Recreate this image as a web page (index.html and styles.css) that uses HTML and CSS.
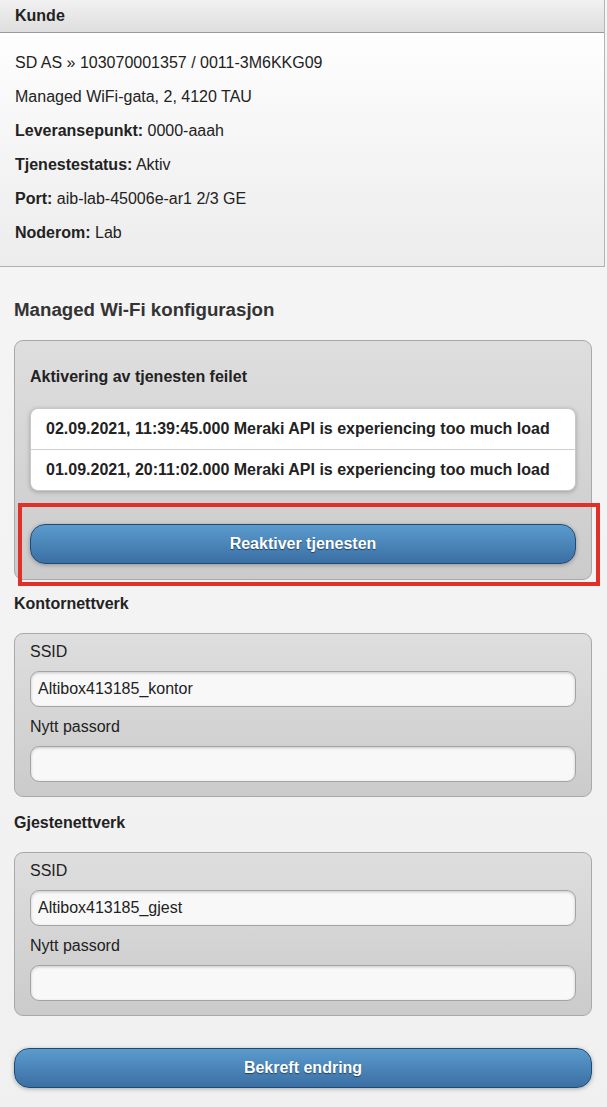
FILE: index.html
```html
<!DOCTYPE html>
<html>
  <head>
  <meta charset="utf-8">
  <link rel="stylesheet" href="styles.css">
  </head>
  <body>

    <div class="collapsible">
      <div class="collapsible-heading">Kunde</div>
      <div class="collapsible-content">
        <p>SD AS &raquo; 103070001357 / 0011-3M6KKG09</p>
        <p>Managed WiFi-gata, 2, 4120 TAU</p>
        <p><strong>Leveransepunkt:</strong> 0000-aaah</p>
        <p><strong>Tjenestestatus:</strong> Aktiv</p>
        <p><strong>Port:</strong> aib-lab-45006e-ar1 2/3 GE</p>
        <p><strong>Noderom:</strong> Lab</p>
      </div>
    </div>

    <div class="page">
      <h2>Managed Wi-Fi konfigurasjon</h2>

      <div class="box box-error">
        <h3>Aktivering av tjenesten feilet</h3>
        <ul class="listview">
          <li>02.09.2021, 11:39:45.000 Meraki API is experiencing too much load</li>
          <li>01.09.2021, 20:11:02.000 Meraki API is experiencing too much load</li>
        </ul>
        <div class="button-wrap">
          <button class="btn">Reaktiver tjenesten</button>
          <div class="highlight"></div>
        </div>
      </div>

      <h4 class="first">Kontornettverk</h4>
      <div class="box">
        <label>SSID</label>
        <input class="field" type="text" value="Altibox413185_kontor">
        <label>Nytt passord</label>
        <input class="field" type="password" value="">
      </div>

      <h4>Gjestenettverk</h4>
      <div class="box">
        <label>SSID</label>
        <input class="field" type="text" value="Altibox413185_gjest">
        <label>Nytt passord</label>
        <input class="field" type="password" value="">
      </div>

      <button class="btn btn-submit">Bekreft endring</button>
    </div>

  </body>
</html>
```

FILE: styles.css
```css
html, body {
  height: 100%;
}
body {
  --box-border: #a9a9a9;
  --text: #222;

  margin: 0;
  font-family: "Liberation Sans", Arial, sans-serif;
  font-size: 16px;
  color: var(--text);
  background: linear-gradient(to bottom, #f6f6f6, #f0f0f0);
}

/* customer panel at the top */
.collapsible {
  margin-right: 2px;
  border-right: 1px solid #b4b4b4;
}
.collapsible-heading {
  height: 32px;
  line-height: 31px;
  padding-left: 15px;
  font-weight: bold;
  background: linear-gradient(to bottom, #f1f1f1, #dedede);
  border-bottom: 1px solid #9a9a9a;
}
.collapsible-content {
  padding: 13px 15px 16px;
  background: linear-gradient(to bottom, #fefefe, #ececec);
  border-bottom: 1px solid #b0b0b0;
}
.collapsible-content p {
  margin: 0;
  line-height: 34px;
}

.page {
  padding: 31px 15px 18px 14px;
}

h2 {
  margin: 0 0 18px;
  font-size: 18.7px;
  line-height: 24px;
  color: #333;
}
h4 {
  margin: 16px 0 19px;
  font-size: 16px;
  line-height: 20px;
}
h4.first {
  margin-top: 14px;
}

.box {
  border: 1px solid var(--box-border);
  border-radius: 9px;
  background: linear-gradient(to bottom, #dedede, #cbcbcb);
  padding: 8px 15px 14px;
}
.box-error {
  padding: 26px 15px 15px;
}
.box-error h3 {
  margin: 0 0 21px;
  font-size: 16px;
  line-height: 20px;
}

.listview {
  list-style: none;
  margin: 0 0 33px;
  padding: 0;
  background: #fff;
  border: 1px solid #c8c8c8;
  border-radius: 8px;
  box-shadow: 0 1px 4px rgba(0,0,0,0.25);
}
.listview li {
  height: 40px;
  line-height: 40px;
  padding-left: 15px;
  font-weight: bold;
  white-space: nowrap;
}
.listview li + li {
  border-top: 1px solid #cfcfcf;
}

.btn {
  display: block;
  width: 100%;
  height: 40px;
  border: 1px solid #1f4a74;
  border-radius: 15px;
  background: linear-gradient(to bottom, #5b9bcd, #3b6fa4);
  color: #fff;
  font-family: inherit;
  font-size: 16px;
  font-weight: bold;
  text-shadow: 0 1px 1px #1d4166;
  box-shadow: 0 1px 4px rgba(0,0,0,0.3);
}
.btn-submit {
  margin-top: 32px;
}

.button-wrap {
  position: relative;
}
/* red annotation frame around the reactivate button */
.highlight {
  position: absolute;
  top: -21px;
  left: -12px;
  right: -24px;
  bottom: -22px;
  border: 4px solid #e0302a;
}

label {
  display: block;
  line-height: 20px;
}
.field {
  display: block;
  box-sizing: border-box;
  width: 100%;
  height: 36px;
  margin: 9px 0 10px;
  padding: 0 7px;
  border: 1px solid #a4a4a4;
  border-radius: 9px;
  background: #f8f8f8;
  box-shadow: inset 0 1px 3px rgba(0,0,0,0.2);
  font-family: inherit;
  font-size: 16px;
  color: #222;
}
label + .field:last-child {
  margin-bottom: 0;
}
```
